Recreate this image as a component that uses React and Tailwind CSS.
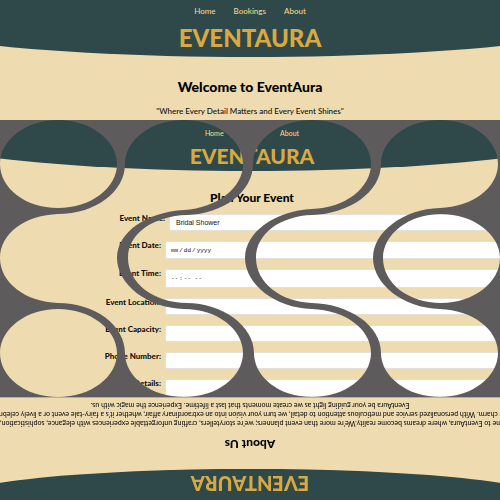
import React from "react";

const FIELDS = [
  { id: "name", label: "Event Name:", type: "text", value: "Bridal Shower", row: "mb-[10px] ml-[6px] h-[17px]" },
  { id: "date", label: "Event Date:", type: "date", row: "mb-[10px] h-[18px]" },
  { id: "time", label: "Event Time:", type: "time", row: "mb-[10px] h-[19px]" },
  { id: "location", label: "Event Location:", type: "text", row: "mb-[10px] h-[17px]" },
  { id: "capacity", label: "Event Capacity:", type: "text", row: "mb-[10px] h-[17px]" },
  { id: "phone", label: "Phone Number:", type: "tel", row: "mb-[10px] h-[17px]" },
  { id: "details", label: "Event Details:", type: "text", row: "h-[18px]" },
];

function Nav({ className }) {
  return (
    <nav className={className}>
      <a href="#home">Home</a>
      <a href="#bookings">Bookings</a>
      <a href="#about">About</a>
    </nav>
  );
}

function Welcome() {
  return (
    <section className="h-[120px] overflow-hidden text-center">
      <header className="h-[57px] bg-[#2f4849] pt-[5px] [clip-path:ellipse(85%_100%_at_50%_0)]">
        <Nav className="flex justify-center gap-[18px] text-[8px] leading-3 font-medium text-[#f0d58a]" />
        <h1 className="mt-[9px] text-[24px] leading-6 font-black text-[#d9a941]">EVENTAURA</h1>
      </header>
      <h2 className="mt-[22px] text-[14px] leading-4 font-black text-black">Welcome to EventAura</h2>
      <p className="mt-[10px] text-[8px] leading-3 font-medium">"Where Every Detail Matters and Every Event Shines"</p>
    </section>
  );
}

// Rounded blobs joined by S-curves, cut out of the grey sheet.
function WaveMask() {
  return (
    <svg
      className="pointer-events-none absolute inset-0 h-full w-full"
      viewBox="0 0 500 277"
      preserveAspectRatio="none"
      aria-hidden="true"
    >
      <path
        fill="#5e5b5c"
        fillRule="evenodd"
        d="M0 0H500V277H0Z
        M0 44C0 20 26 0 58 0S117 20 117 44S91 88 58 88S0 68 0 44Z
        M0 233C0 209 26 189 58 189S117 209 117 233S91 277 58 277S0 257 0 233Z
        M383 138C383 114 409 94 441 94S500 114 500 138S474 183 441 183S383 163 383 138Z
        M125 44C125 20 151 0 184 0S243 20 243 44S217 88 184 90C147 92 117 112 117 138S147 188 184 189C217 189 243 209 243 233S217 277 184 277S125 257 125 233C125 205 95 183 58 183C26 182 0 163 0 138S26 95 58 94C95 94 125 72 125 44Z
        M253 44C253 20 279 0 312 0S371 20 371 44S345 88 312 89C275 91 245 112 245 138S275 188 312 189C345 190 371 209 371 233S345 277 312 277S254 257 254 233C254 205 221 183 187 183C154 183 128 163 128 138S154 96 187 95C223 94 253 72 253 44Z
        M381 44C381 20 407 0 440 0S498 20 498 44S472 87 440 88C403 89 373 112 373 138S403 188 440 189C472 190 498 209 498 233S472 277 440 277S381 257 381 233C381 205 349 184 312 183C281 182 256 163 256 138S281 96 312 95C349 94 381 72 381 44Z"
      />
    </svg>
  );
}

function PlanEvent() {
  return (
    <section className="relative h-[277px] overflow-hidden">
      <header className="h-[51px] bg-[#2f4849] pt-[7px] pl-1 text-center [clip-path:ellipse(76%_100%_at_50%_0)]">
        <Nav className="flex justify-center gap-[14px] text-[7px] leading-3 font-medium text-[#f0d58a]" />
        <h1 className="mt-[7px] text-[21px] leading-5 font-black text-[#d9a941]">EVENTAURA</h1>
      </header>
      <h2 className="mt-[19px] pl-1 text-center text-[12px] leading-4 font-black text-black">Plan Your Event</h2>
      <form className="mt-[8px]">
        {FIELDS.map((f) => (
          <div key={f.id} className={"flex items-start " + f.row}>
            <label htmlFor={f.id} className="w-[33%] shrink-0 pr-[4px] text-right text-[8px] leading-[9px] font-black">
              {f.label}
            </label>
            <input
              id={f.id}
              type={f.type}
              defaultValue={f.value}
              className={
                "h-full min-w-0 flex-1 rounded-l-[2px] border border-r-0 border-[#e4e0d8] bg-white text-[#111] [&::-webkit-calendar-picker-indicator]:hidden " +
                (f.type === "date" || f.type === "time"
                  ? "px-[4px] font-['Liberation_Mono',monospace] text-[6px]"
                  : "px-[6px] font-['Liberation_Sans',sans-serif] text-[7px]")
              }
            />
          </div>
        ))}
      </form>
      <WaveMask />
    </section>
  );
}

function About() {
  return (
    <section className="h-[103px] rotate-180 overflow-hidden border-b border-[#c2ad87] text-center">
      <header className="h-[31px] bg-[#2f4849] pt-[6px] [clip-path:ellipse(60%_100%_at_50%_0)]">
        <h1 className="text-[20px] leading-5 font-black text-[#d9a941]">EVENTAURA</h1>
      </header>
      <h2 className="mt-[17px] text-[12px] leading-4 font-black text-black">About Us</h2>
      <p className="mt-[8px] flex flex-col items-center text-[7px] leading-[9px] font-medium whitespace-nowrap">
        <span>
          come to EventAura, where dreams become reality.We're more than event planners; we're storytellers, crafting
          unforgettable experiences with elegance, sophistication, an
        </span>
        <span>
          re charm. With personalized service and meticulous attention to detail, we turn your vision into an
          extraordinary affair, whether it's a fairy-tale event or a lively celebrat
        </span>
        <span>
          EventAura be your guiding light as we create moments that last a lifetime. Experience the magic with us.
        </span>
      </p>
    </section>
  );
}

export default function App() {
  return (
    <main className="overflow-hidden bg-[#eedbb0] font-['Lato',sans-serif] text-[#111]">
      <Welcome />
      <PlanEvent />
      <About />
    </main>
  );
}
